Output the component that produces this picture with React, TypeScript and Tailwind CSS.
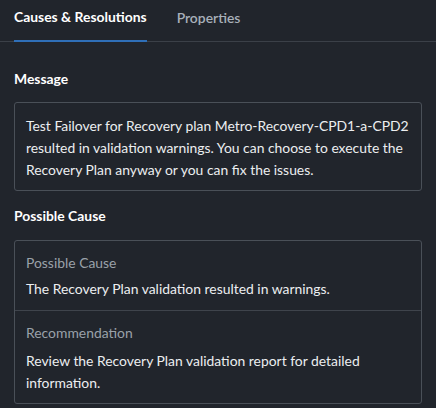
export default function App() {
  return (
    <div
      className="w-[436px] h-[408px] bg-[#21252c] text-[#eceef0] overflow-hidden"
      style={{ fontFamily: "Lato, 'Open Sans', sans-serif" }}
    >
      {/* Tabs */}
      <div className="flex h-[42px] border-b border-[#3b4048] px-[14px] gap-[30px]">
        <div className="flex items-center pb-[5px] border-b-2 border-[#2f6fb8] -mb-px text-[13.9px] font-bold text-white">
          Causes &amp; Resolutions
        </div>
        <div className="flex items-center pb-[5px] text-[13.9px] font-semibold text-[#a8b0ba]">
          Properties
        </div>
      </div>

      <div className="px-[14px]">
        {/* Message */}
        <h2 className="mt-[28px] text-[13.9px] font-bold leading-[18px] text-white">Message</h2>
        <div className="mt-[14px] rounded-[3px] border border-[#4a5058] px-[11px] pt-[12px] pb-[9px] text-[13.9px] leading-[22px]">
          Test Failover for Recovery plan Metro-Recovery-CPD1-a-CPD2 resulted in validation warnings. You can choose
          to execute the Recovery Plan anyway or you can fix the issues.
        </div>

        {/* Possible Cause */}
        <h2 className="mt-[16px] text-[13.9px] font-bold leading-[18px] text-white">Possible Cause</h2>
        <div className="mt-[15px] rounded-[3px] border border-[#4a5058] text-[13.9px]">
          <div className="px-[11px] pt-[12px] pb-[11px] border-b border-[#3f444c]">
            <div className="leading-[20px] text-[#9aa1a9]">Possible Cause</div>
            <div className="mt-[6px] leading-[20px]">The Recovery Plan validation resulted in warnings.</div>
          </div>
          <div className="px-[11px] pt-[12px] pb-[9px]">
            <div className="leading-[20px] text-[#9aa1a9]">Recommendation</div>
            <div className="mt-[7px] leading-[22px]">
              Review the Recovery Plan validation report for detailed information.
            </div>
          </div>
        </div>
      </div>
    </div>
  );
}
